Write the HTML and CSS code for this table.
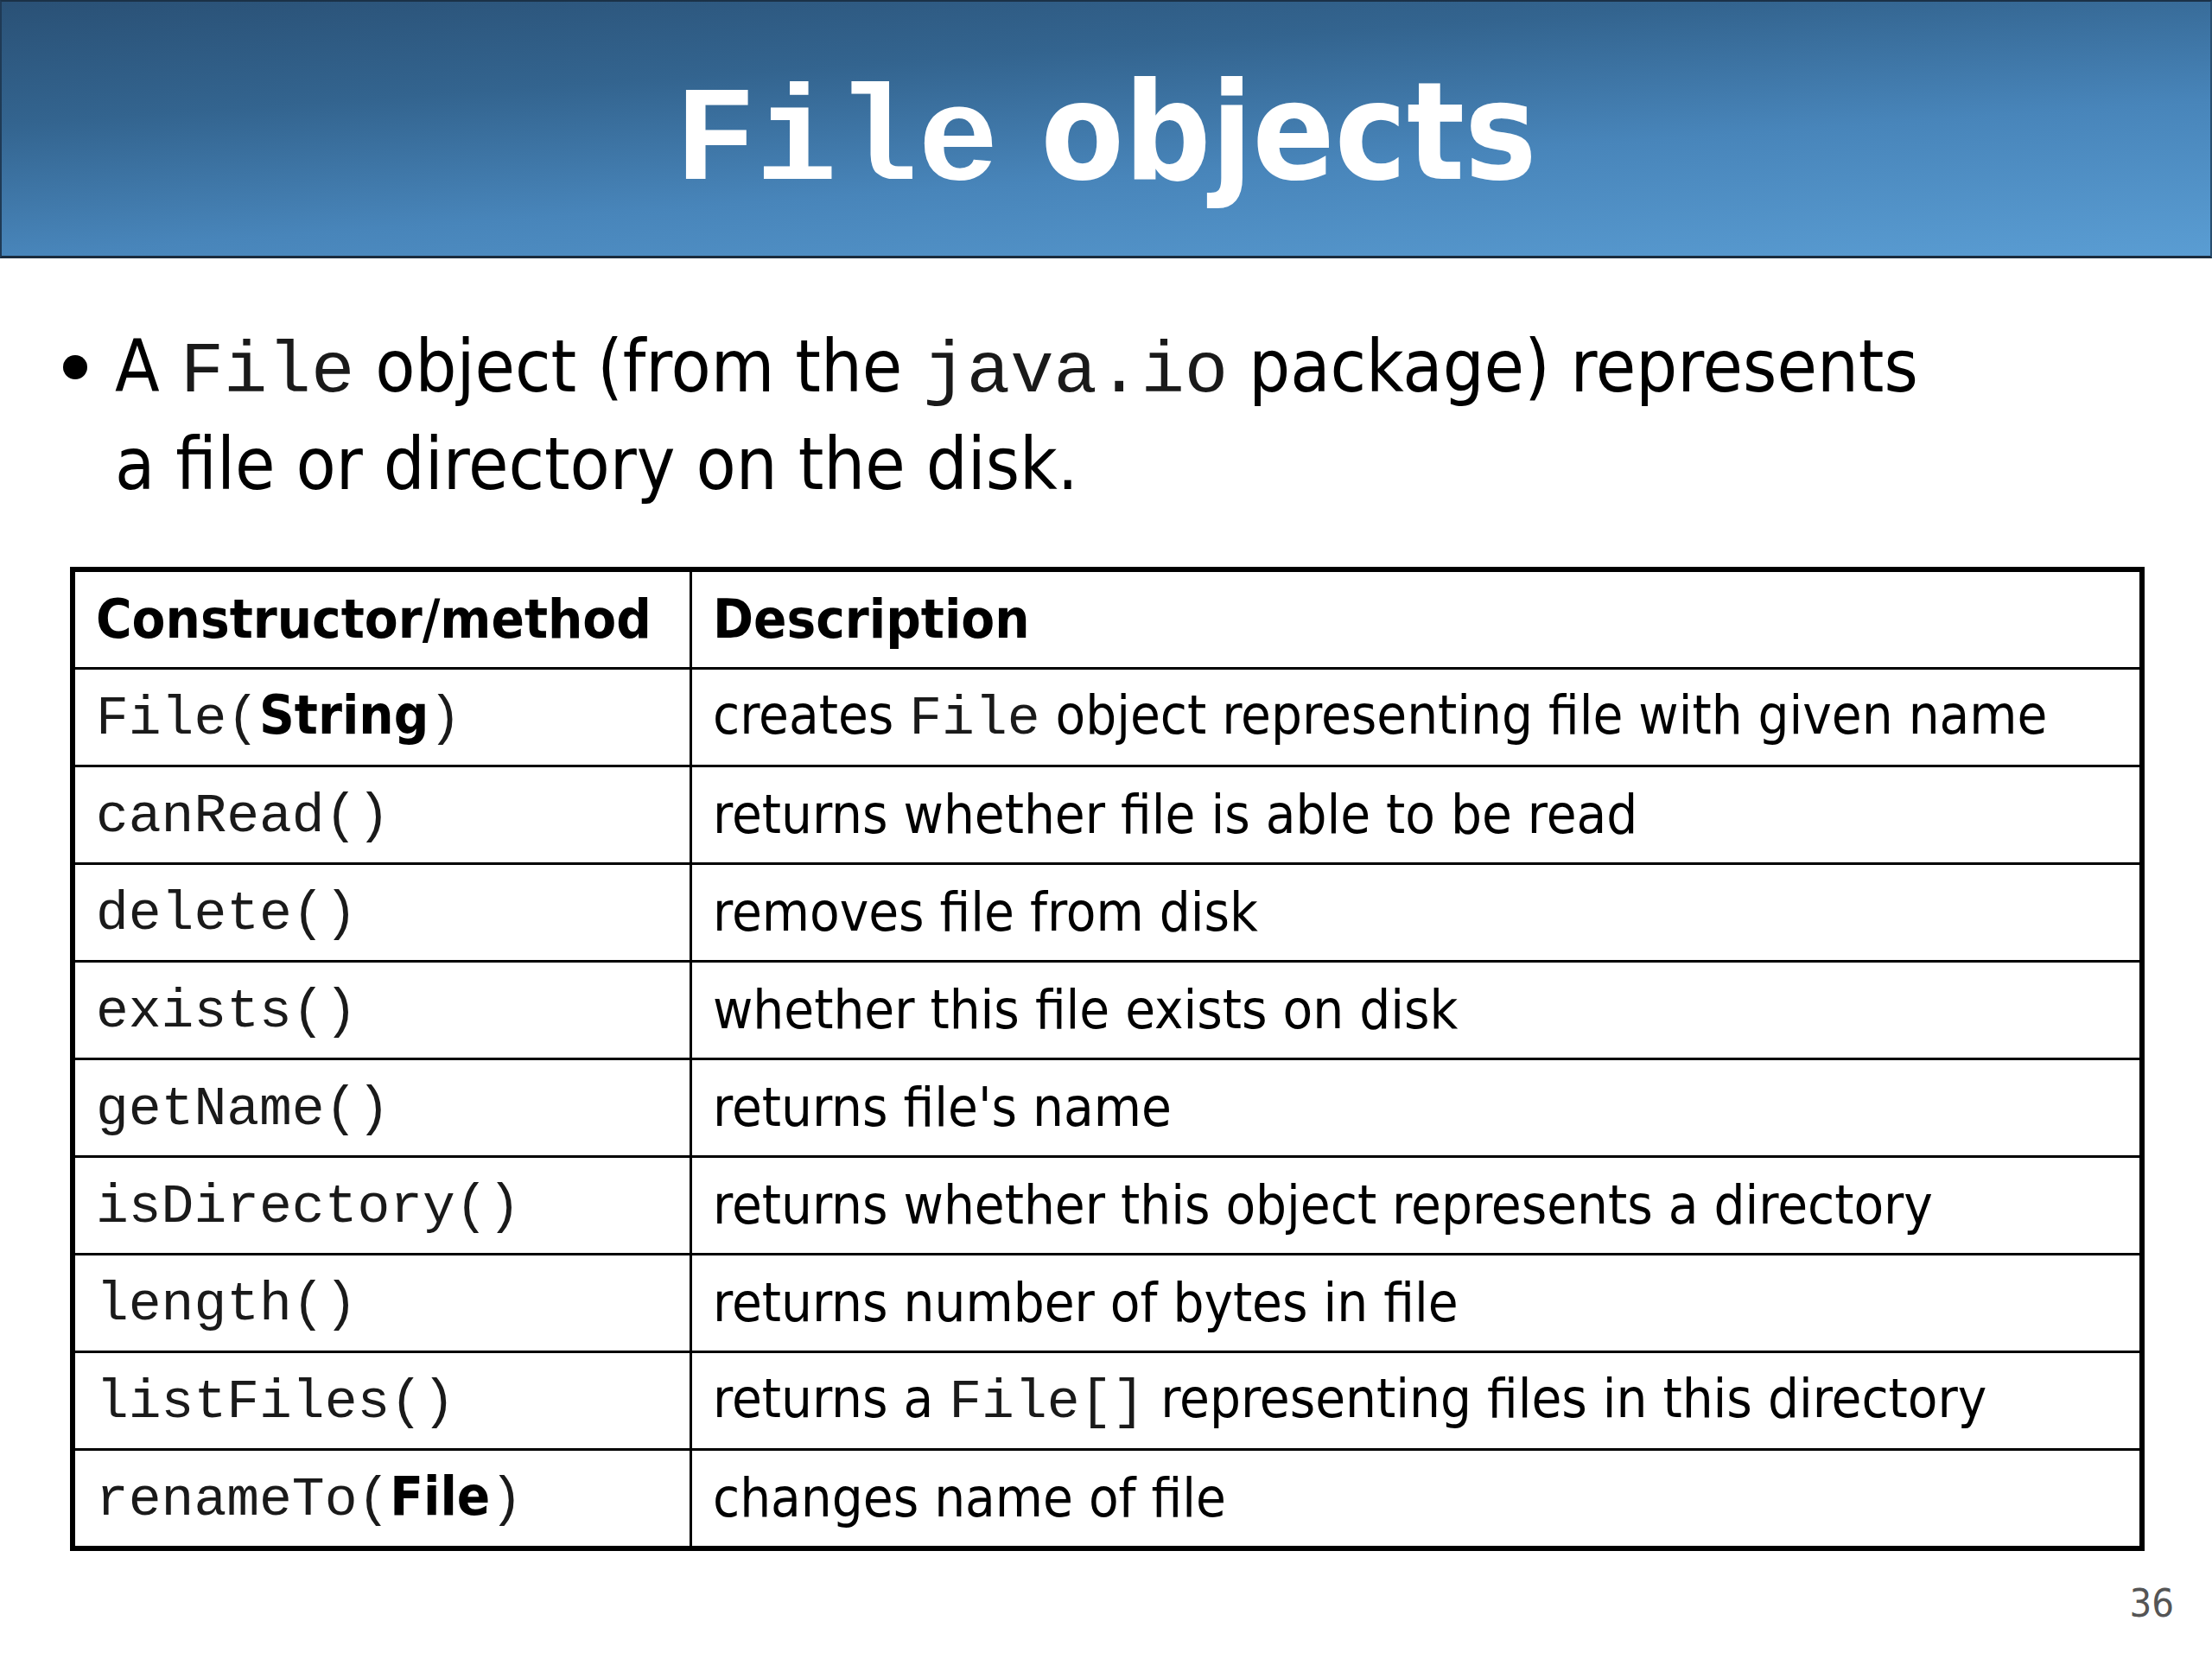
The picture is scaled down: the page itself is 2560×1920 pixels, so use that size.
FILE: index.html
```html
<!DOCTYPE html>
<html lang="en">
<head>
<meta charset="utf-8">
<title>File objects</title>
<link rel="stylesheet" href="styles.css">
</head>
<body>
<div class="slide">
  <header class="title-bar">
    <h1 class="title"><span class="code">File</span> objects</h1>
  </header>

  <section class="bullets">
    <ul class="bullet-list">
      <li class="bullet-item"><span class="bullet-text">A <span class="code">File</span> object (from the <span class="code">java.io</span> package) represents<br>a file or directory on the disk.</span></li>
    </ul>
  </section>

  <section class="table-wrap">
    <table class="api">
      <thead>
        <tr>
          <th class="col-method">Constructor/method</th>
          <th class="col-desc">Description</th>
        </tr>
      </thead>
      <tbody>
        <tr><td class="col-method"><span class="code">File(</span><b class="arg">String</b><span class="code">)</span></td><td class="col-desc">creates <span class="code">File</span> object representing file with given name</td></tr>
        <tr><td class="col-method"><span class="code">canRead()</span></td><td class="col-desc">returns whether file is able to be read</td></tr>
        <tr><td class="col-method"><span class="code">delete()</span></td><td class="col-desc">removes file from disk</td></tr>
        <tr><td class="col-method"><span class="code">exists()</span></td><td class="col-desc">whether this file exists on disk</td></tr>
        <tr><td class="col-method"><span class="code">getName()</span></td><td class="col-desc">returns file's name</td></tr>
        <tr><td class="col-method"><span class="code">isDirectory()</span></td><td class="col-desc">returns whether this object represents a directory</td></tr>
        <tr><td class="col-method"><span class="code">length()</span></td><td class="col-desc">returns number of bytes in file</td></tr>
        <tr><td class="col-method"><span class="code">listFiles()</span></td><td class="col-desc">returns a <span class="code">File[]</span> representing files in this directory</td></tr>
        <tr><td class="col-method"><span class="code">renameTo(</span><b class="arg">File</b><span class="code">)</span></td><td class="col-desc">changes name of file</td></tr>
      </tbody>
    </table>
  </section>

  <footer class="page-num">36</footer>
</div>
</body>
</html>
```

FILE: styles.css
```css
html, body {
  margin: 0;
  padding: 0;
  background: #ffffff;
}

.slide {
  width: 2560px;
  height: 1920px;
  display: flex;
  flex-direction: column;
  font-family: "DejaVu Sans Condensed", "DejaVu Sans", sans-serif;
  font-stretch: semi-condensed;
  color: #000;
}

.code {
  font-family: "Liberation Mono", "Courier New", monospace;
  font-stretch: normal;
  font-weight: normal;
  font-size: 1em;
}

/* ---------- title bar ---------- */
.title-bar {
  height: 294px;
  border-top: 2px solid #1b3147;
  border-left: 2px solid #1f3a55;
  border-right: 2px solid #2a4f70;
  border-bottom: 3px solid #1a2c3e;
  background: linear-gradient(176deg, #2a5176 0%, #33648f 30%, #4885ba 62%, #5a9dd3 100%);
}

.title {
  margin: 0;
  padding-top: 61px;
  text-align: center;
  font-size: 156px;
  line-height: 180px;
  font-weight: bold;
  color: #ffffff;
}

.title .code {
  font-weight: bold;
}

/* ---------- bullet ---------- */
.bullets {
  padding: 72px 0 0 73px;
}

.bullet-list {
  list-style: none;
  margin: 0;
  padding: 0;
}

.bullet-item {
  display: flex;
  align-items: flex-start;
  font-size: 84px;
  line-height: 106px;
}

.bullet-item::before {
  content: "";
  flex: none;
  width: 28px;
  height: 28px;
  border-radius: 50%;
  background: #000;
  margin: 40px 32px 0 0;
}

.bullet-text .code {
  color: #1a1a1a;
}

/* ---------- table ---------- */
.table-wrap {
  padding: 66px 0 0 81px;
}

.api {
  width: 2401px;
  border-collapse: collapse;
  border: 6px solid #000;
  font-size: 63px;
}

.api th,
.api td {
  border: 3px solid #000;
  height: 110px;
  padding: 0 22px 0 24px;
  text-align: left;
  vertical-align: middle;
  line-height: 1.2;
  white-space: nowrap;
}

.api th {
  font-weight: bold;
}

.col-method {
  width: 665px;
}

.api .code {
  color: #1a1a1a;
}

.arg {
  font-weight: bold;
}

/* ---------- footer ---------- */
.page-num {
  margin-top: 34px;
  padding-right: 44px;
  text-align: right;
  font-size: 45px;
  line-height: 54px;
  color: #555555;
}
```
